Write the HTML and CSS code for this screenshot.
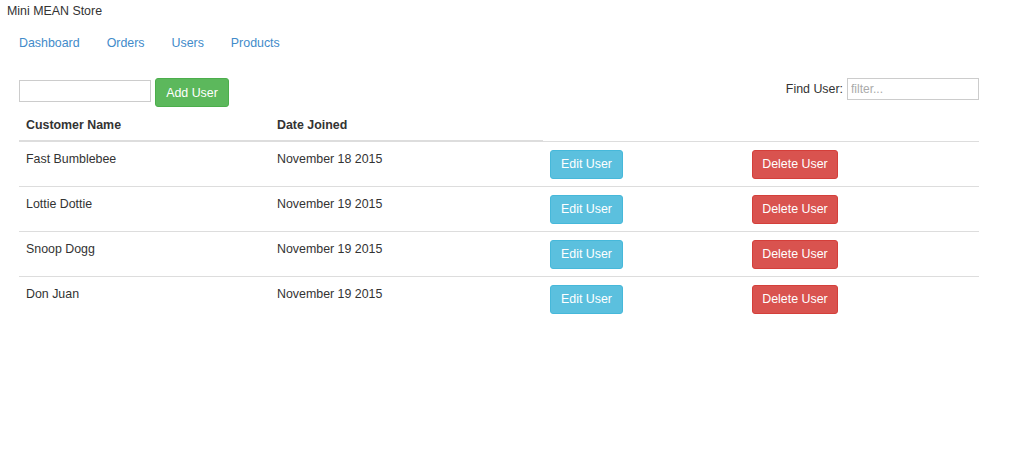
FILE: index.html
```html
<!DOCTYPE html>
<html>
<head>
<meta charset="utf-8">
<title>Mini MEAN Store</title>
<link rel="stylesheet" href="styles.css">
</head>
<body>
<div class="brand">Mini MEAN Store</div>
<ul class="nav">
  <li><a href="#">Dashboard</a></li>
  <li><a href="#">Orders</a></li>
  <li><a href="#">Users</a></li>
  <li><a href="#">Products</a></li>
</ul>
<div class="toolbar">
  <div class="add-form">
    <input class="field add-field" type="text">
    <button class="btn btn-success">Add User</button>
  </div>
  <div class="find">
    <label>Find User:</label>
    <input class="field find-field" type="text" placeholder="filter...">
  </div>
</div>
<table class="table">
  <thead>
    <tr><th class="c-name">Customer Name</th><th class="c-date">Date Joined</th></tr>
  </thead>
  <tbody>
    <tr><td>Fast Bumblebee</td><td>November 18 2015</td><td class="c-edit"><button class="btn btn-info">Edit User</button></td><td><button class="btn btn-danger">Delete User</button></td></tr>
    <tr><td>Lottie Dottie</td><td>November 19 2015</td><td class="c-edit"><button class="btn btn-info">Edit User</button></td><td><button class="btn btn-danger">Delete User</button></td></tr>
    <tr><td>Snoop Dogg</td><td>November 19 2015</td><td class="c-edit"><button class="btn btn-info">Edit User</button></td><td><button class="btn btn-danger">Delete User</button></td></tr>
    <tr><td>Don Juan</td><td>November 19 2015</td><td class="c-edit"><button class="btn btn-info">Edit User</button></td><td><button class="btn btn-danger">Delete User</button></td></tr>
  </tbody>
</table>
</body>
</html>
```
FILE: styles.css
```css
html, body {
  margin: 0;
  padding: 0;
  background: #fff;
  color: #333;
  font-family: "Liberation Sans", Arial, sans-serif;
  font-size: 12.4px;
  line-height: 18px;
}
.brand {
  padding: 2px 7px 0;
}
.nav {
  list-style: none;
  display: flex;
  margin: 4px 0 0;
  padding: 0 5.5px;
}
.nav li a {
  display: block;
  padding: 10px 13.5px;
  color: #428bca;
  text-decoration: none;
}
.toolbar {
  display: flex;
  justify-content: space-between;
  align-items: flex-start;
  margin: 16px 45px 0 19px;
}
.add-form {
  display: flex;
  align-items: flex-start;
  gap: 4px;
}
.field {
  box-sizing: border-box;
  height: 22px;
  border: 1px solid #ccc;
  border-radius: 0;
  padding: 2px 3px;
  font-family: inherit;
  font-size: 12px;
  color: #333;
  background: #fff;
  margin: 0;
}
.add-field {
  width: 132px;
  margin-top: 2px;
}
.find {
  display: flex;
  align-items: center;
  gap: 4px;
}
.find label {
  color: #333;
}
.find-field {
  width: 132px;
}
.find-field::placeholder {
  color: #aaa;
}
.btn {
  box-sizing: border-box;
  height: 29px;
  padding: 1px 0 0;
  border: 1px solid transparent;
  border-radius: 3px;
  font-family: inherit;
  font-size: 12.4px;
  line-height: 17px;
  color: #fff;
  white-space: nowrap;
  text-align: center;
  cursor: pointer;
}
.btn-success {
  background: #5cb85c;
  border-color: #4cae4c;
  width: 74px;
}
.btn-info {
  background: #5bc0de;
  border-color: #46b8da;
  width: 73px;
}
.btn-danger {
  background: #d9534f;
  border-color: #d43f3a;
  width: 86px;
}
.table {
  border-collapse: collapse;
  width: 960px;
  margin: 0 0 0 19px;
}
.table th {
  text-align: left;
  font-weight: bold;
  padding: 9px 7px 6px;
  border-bottom: 2px solid #ddd;
  vertical-align: bottom;
}
.table td {
  padding: 8px 7px 7px;
  border-top: 1px solid #ddd;
  vertical-align: top;
}
.c-name { width: 237px; }
.c-date { width: 259px; }
.table td:nth-child(1) { width: 237px; }
.table td:nth-child(2) { width: 259px; }
.table td:nth-child(3) { width: 188px; }
```
